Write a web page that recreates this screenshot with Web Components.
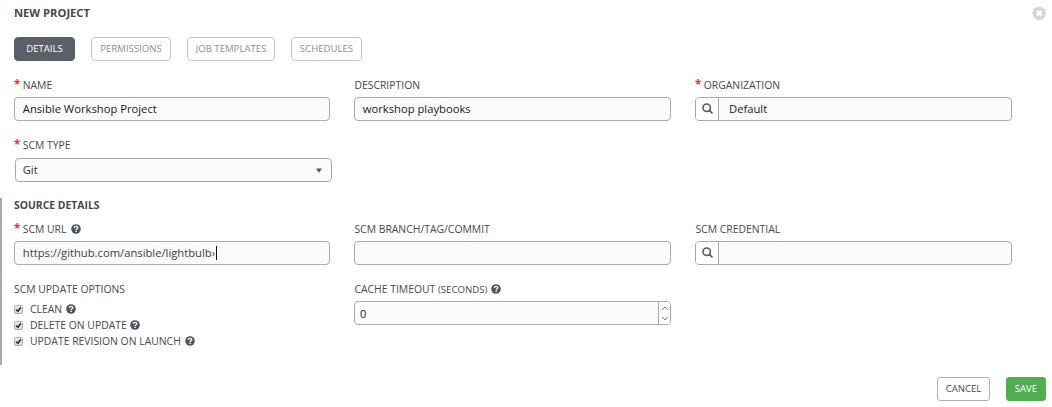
<!DOCTYPE html>
<html lang="en"><head><meta charset="utf-8"><title>New Project</title>
<style>
body{margin:0;background:#fff;font-family:"Open Sans","Noto Sans",sans-serif;color:#484848}
</style></head><body>
<project-form></project-form>
<script>
const define=(name,html)=>customElements.define(name,class extends HTMLElement{
  connectedCallback(){
    if(this.shadowRoot)return;
    const t=document.createElement('template');
    t.innerHTML='<style>*{box-sizing:border-box}:host{box-sizing:border-box}</style>'+html;
    this.attachShadow({mode:'open'}).append(t.content.cloneNode(true));
  }
});

define('help-icon',`<style>:host{display:inline-block;width:10px;height:10px;line-height:0;white-space:normal;vertical-align:-1px;margin-left:1px}svg{display:block}</style><svg width="10" height="10" viewBox="0 0 10 10"><circle cx="5" cy="5" r="4.8" fill="#4f5661"/><path d="M3.3 3.9C3.4 2.8 4.1 2.4 5 2.4c1 0 1.8.6 1.8 1.4C6.8 4.800 5.200 4.800 5.200 6" fill="none" stroke="#fff" stroke-width="1.350"/><rect x="4.500" y="6.700" width="1.400" height="1.300" fill="#fff"/></svg>`);

define('search-icon',`<style>:host{display:block;width:11px;height:11px}svg{display:block}</style>
<svg width="11" height="11" viewBox="0 0 11 11" fill="none" stroke="#555b66"><circle cx="4.700" cy="4.700" r="3.700" stroke-width="1.600"/><path d="M7.400 7.400L9.900 9.900" stroke-width="1.800" stroke-linecap="round"/></svg>`);

define('close-icon',`<style>:host{display:block;width:14px;height:14px}svg{display:block}</style>
<svg width="14" height="14" viewBox="0 0 14 14"><circle cx="7.200" cy="7.200" r="6.700" fill="#d5d5d5"/><path d="M4.800 4.800L9.600 9.600M9.600 4.800L4.800 9.600" stroke="#fff" stroke-width="2.300"/></svg>`);

define('tab-button',`<style>:host{display:flex;align-items:center;justify-content:center;height:24px;border:1px solid #c4c4c4;border-radius:4px;color:#8c8f93;font-size:9.600px;background:#fff;padding-bottom:2px}
:host([active]){background:#5b5f68;border-color:#5b5f68;color:#fff}</style><slot></slot>`);

define('action-button',`<style>:host{display:flex;align-items:center;justify-content:center;height:24px;border:1px solid #b2b2b2;border-radius:3px;color:#484848;font-size:9.600px;background:#fff;padding-bottom:2px}
:host([primary]){background:#50ad50;border-color:#50ad50;color:#fff}</style><slot></slot>`);

define('form-field',`<style>
:host{display:block}
.label{display:flex;align-items:center;height:16px;font-size:10.400px;line-height:16px;white-space:pre;margin-bottom:4px}
.req{color:#dc3a3a;font-weight:700;font-size:11.500px;width:8.700px;height:16px;line-height:16px;display:none}
:host([required]) .req{display:block}
:host(:not([required])) .label{padding-left:.4px}
</style><div class="label"><span class="req">*</span><slot name="label"></slot></div><slot></slot>`);

define('text-box',`<style>
:host{display:flex;height:24px;border:1px solid #aaa;border-radius:4px;background:#fbfbfb;font-size:11.230px;line-height:22px;color:#161b1f;overflow:hidden}
.value{flex:1;padding-left:7.800px;white-space:pre;display:flex;align-items:center}
.find{width:23px;border-right:1px solid #aaa;background:#fff;display:none;align-items:center;justify-content:center;padding:0 0 1px 1px}
:host([lookup]) .find{display:flex}
:host([lookup]) .value{padding-left:10px}
.spin{display:none;width:12px;border-left:1px solid #aaa;background:#fff;align-items:center;justify-content:center}
:host([number]) .spin{display:flex}
:host([number]) .value{padding-left:5px;padding-top:2px}
.arrow{display:none;width:24px;align-items:center;justify-content:center;padding-top:1px}
:host([select]) .arrow{display:flex}
:host([select]) .value{padding-left:6.700px}
:host([select]){color:#30343a}
.caret{display:none;width:1px;height:14px;margin-left:.6px;background:#111}
:host([focused]) .caret{display:block}
:host([focused]){color:#383e44}
</style><div class="find"><search-icon></search-icon></div><div class="value"><slot></slot><span class="caret"></span></div>
<div class="spin"><svg width="8" height="20" viewBox="0 0 8 20" fill="none" stroke="#777" stroke-width="1"><path d="M1.200 6.800L4 4L6.800 6.800M1.200 14.200L4 17L6.800 14.200"/></svg></div>
<div class="arrow"><svg width="6" height="5" viewBox="0 0 6 5"><path d="M0 .6H6L3 4.800Z" fill="#525863"/></svg></div>`);

define('check-option',`<style>
:host{display:flex;align-items:center;height:16px;font-size:10.400px;line-height:16px;white-space:pre}
svg{display:block;margin-right:7px}
</style><svg width="9" height="9" viewBox="0 0 9 9"><defs><linearGradient id="g" x2="0" y2="1"><stop stop-color="#eee"/><stop offset="1" stop-color="#d8d8d8"/></linearGradient></defs><rect x=".5" y=".5" width="8" height="8" rx="1" fill="url(#g)" stroke="#aaa"/><path d="M2.200 4.600L3.900 6.300L6.900 2.200" fill="none" stroke="#333" stroke-width="1.600"/></svg><slot></slot>`);

define('project-form',`<style>
:host{display:flex;flex-direction:column;width:1052px;height:407px;overflow:hidden}
header{display:flex;justify-content:space-between;height:37px;padding:6px 6px 0 14px}
h1,h2{margin:0;font-weight:700;line-height:15px}
h1{font-size:11.200px;line-height:13px}
h2{font-size:10.400px}
nav{display:flex;gap:16px;padding-left:14px;height:24px}
.row{display:grid;grid-template-columns:316px 317px 317px;column-gap:24px}
.top{padding:16px 0 0 14px}
.type{padding:16px 0 0 14px;height:77px}
.type text-box{width:317px;margin:5px 0 0 1px}
section{height:167px;border-left:2px solid #aaa;padding:0 0 0 12px}
h2{height:23px}
.second{margin-top:16px}
.options{height:20px;font-size:10.400px;line-height:16px}
footer{display:flex;justify-content:flex-end;gap:16px;padding:12px 6px 0 0}
small{font-size:9.600px}
</style>
<header><h1>NEW PROJECT</h1><close-icon></close-icon></header>
<nav><tab-button active style="width:61px">DETAILS</tab-button><tab-button style="width:80px">PERMISSIONS</tab-button><tab-button style="width:88px">JOB TEMPLATES</tab-button><tab-button style="width:71px">SCHEDULES</tab-button></nav>
<div class="row top">
<form-field required><span slot="label">NAME</span><text-box>Ansible Workshop Project</text-box></form-field>
<form-field><span slot="label">DESCRIPTION</span><text-box>workshop playbooks</text-box></form-field>
<form-field required><span slot="label">ORGANIZATION</span><text-box lookup>Default</text-box></form-field>
</div>
<div class="type"><form-field required><span slot="label">SCM TYPE</span><text-box select>Git</text-box></form-field></div>
<section><h2>SOURCE DETAILS</h2>
<div class="row">
<form-field required><span slot="label">SCM URL <help-icon style="margin-left:1.600px"></help-icon></span><text-box focused>https://github.com/ansible/lightbulb›</text-box></form-field>
<form-field><span slot="label">SCM BRANCH/TAG/COMMIT</span><text-box></text-box></form-field>
<form-field><span slot="label">SCM CREDENTIAL</span><text-box lookup></text-box></form-field>
</div>
<div class="row second">
<div><div class="options">SCM UPDATE OPTIONS</div>
<check-option>CLEAN <help-icon></help-icon></check-option>
<check-option>DELETE ON UPDATE <help-icon></help-icon></check-option>
<check-option>UPDATE REVISION ON LAUNCH <help-icon></help-icon></check-option></div>
<form-field><span slot="label">CACHE TIMEOUT <small>(SECONDS)</small> <help-icon></help-icon></span><text-box number>0</text-box></form-field>
</div></section>
<footer><action-button style="width:53px">CANCEL</action-button><action-button primary style="width:40px">SAVE</action-button></footer>`);
</script>
</body></html>
